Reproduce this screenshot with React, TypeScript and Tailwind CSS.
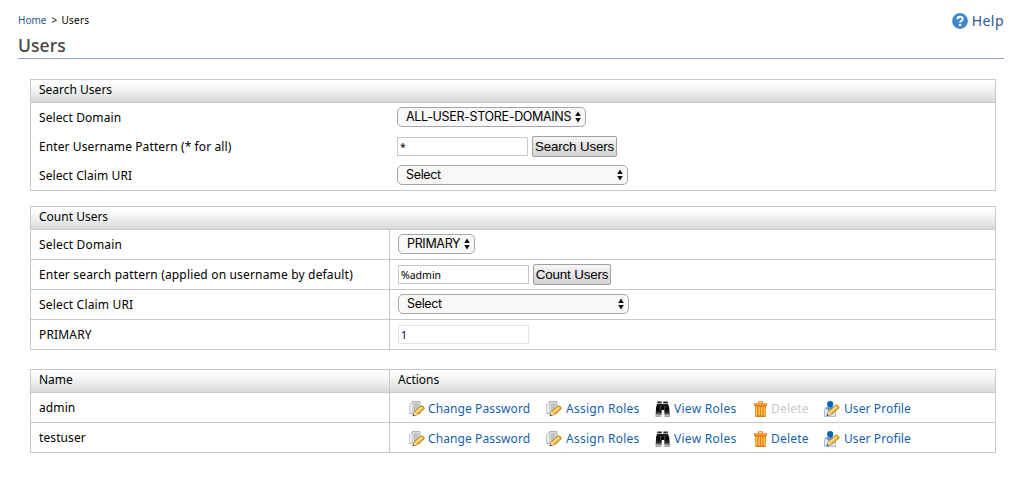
import React from 'react';

const label = "font-['Noto_Sans','Open_Sans',sans-serif] text-[12px] leading-[16px] whitespace-nowrap text-black";

function Header({ children }: { children?: React.ReactNode }) {
  return (
    <div className="flex h-[23px] border-b border-[#c8c8ca] bg-linear-to-b from-white from-10% via-[#eff1f1] via-50% to-[#d6d8da]">
      {children}
    </div>
  );
}

function Select({ text, className }: { text: string; className: string }) {
  return (
    <div className={`flex h-5 items-center justify-between rounded-[5px] border border-[#a6a6a6] bg-[#f8f8f8] pr-[4px] pl-[8px] ${className}`}>
      <span className="font-['Inter',sans-serif] text-[12.5px] leading-[16px] tracking-[-0.33px] whitespace-nowrap text-black">{text}</span>
      <svg width="6" height="12" viewBox="0 0 6 12" className="shrink-0">
        <path d="M3 .5 5.8 5H.2zM3 11.5 5.8 7H.2z" fill="#111" />
      </svg>
    </div>
  );
}

function Field({ value, className }: { value: string; className: string }) {
  return (
    <input
      readOnly
      value={value}
      className={`h-[19px] w-[131px] border bg-white pt-px pl-[2px] font-['Noto_Sans',sans-serif] text-[10.5px] leading-[15px] outline-none ${className}`}
    />
  );
}

function Button({ text, className }: { text: string; className: string }) {
  return (
    <button className={`h-[21px] rounded-[2px] border border-[#a0a0a0] bg-linear-to-b from-[#f6f6f6] to-[#d2d2d2] font-['Liberation_Sans',sans-serif] text-[13.33px] leading-[18px] tracking-[-0.15px] whitespace-nowrap text-black ${className}`}>
      {text}
    </button>
  );
}

function PageEdit() {
  return (
    <svg width="16" height="16" viewBox="0 0 16 16">
      <path d="M3.5.5H11v12H3L1 13V3z" fill="#dcdcdc" stroke="#a9a9a9" strokeWidth=".9" />
      <path d="M1 3 3.5.8V11L1 13z" fill="#f6f6f6" stroke="#b8b8b8" strokeWidth=".6" />
      <path d="M4.8 3h4.6M4.8 5h4.6M4.8 7h4M4.8 9h2.5" stroke="#a8a8a8" />
      <path d="m4 14.8 1.6-4.4 6.6-5.6q2.6.3 3.2 2.8l-6.8 5.9z" fill="#f7b92c" stroke="#a87322" strokeWidth=".9" />
      <path d="m7.2 11.2 5.8-4.9" stroke="#ffe99c" strokeWidth="1.5" />
      <path d="m4.2 14.6 1.4-3.7 2.5 2.3z" fill="#f9e2c4" />
      <path d="m3.6 15.2.8-2 1.4 1.3z" fill="#333" />
    </svg>
  );
}

function Binoculars() {
  return (
    <svg width="16" height="16" viewBox="0 0 16 16">
      <defs>
        <linearGradient id="lens" x1="0" y1="0" x2="0" y2="1">
          <stop offset="0" stopColor="#222" />
          <stop offset=".45" stopColor="#000" />
          <stop offset=".75" stopColor="#333" />
          <stop offset="1" stopColor="#b5b5b5" />
        </linearGradient>
      </defs>
      <path d="M2 3H13l1 2.5 1 9H9.3V9H6.7v5.5H.5L1.2 5.5z" fill="url(#lens)" />
      <path d="M2.3.5h4.4V2H2.3zM8.3.5h4.4V2H8.3z" fill="#222" />
      <path d="M2.3 2.5H7M8.3 2.5H13" stroke="#999" strokeWidth=".8" />
      <path d="M5.7 5v4M9.8 5v4" stroke="#777" strokeWidth=".7" />
      <path d="M.5 15.2h5.6M9.5 15.2h5.5" stroke="#777" strokeWidth="1" />
    </svg>
  );
}

function Trash() {
  return (
    <svg width="16" height="16" viewBox="0 0 16 16">
      <path d="M5 .3h5v1.9h4v2.9H1V2.2h4z" fill="#f0821c" />
      <path d="M6 1.6h3" stroke="#fff0cd" strokeWidth=".9" />
      <path d="M1.5 3.1h12" stroke="#ffb45a" strokeWidth=".9" />
      <path d="M2 5.1h11l-.3 10.6H2.3z" fill="#e98518" />
      <path d="M3.6 6v8.5M6.2 6v8.5M8.8 6v8.5M11.4 6v8.5" stroke="#ffd063" strokeWidth="1.1" />
      <path d="M2.3 15.4h10.4" stroke="#c96c12" strokeWidth=".7" />
    </svg>
  );
}

function UserEdit() {
  return (
    <svg width="16" height="16" viewBox="0 0 16 16">
      <path d="M.6 15.4V8.5Q1 6 4 6h4q3 0 3.4 2.5v6.9z" fill="#e2eff9" stroke="#8ab4d9" strokeWidth=".9" />
      <path d="M1.5 7.5Q6 3.6 10.8 7.5L7 11z" fill="#5d9bd1" />
      <circle cx="6.2" cy="3.2" r="3.1" fill="#0566b3" />
      <path d="m3 14.6 1.4-4.3 7.4-6.2q2.7.2 3.4 2.7l-7.6 6.6z" fill="#f8b931" stroke="#b06d20" strokeWidth=".9" />
      <path d="m6 11.2 6.6-5.6" stroke="#ffe59c" strokeWidth="1.5" />
      <path d="m3.2 14.4 1.2-3.6 2.6 2.3z" fill="#fbe6cc" />
      <path d="m2.6 15.1.8-2 1.4 1.2z" fill="#333" />
    </svg>
  );
}

function Action({ icon, text, className, disabled }: { icon: React.ReactNode; text: string; className: string; disabled?: boolean }) {
  return (
    <a className={`flex shrink-0 items-center ${className}`}>
      {icon}
      <span className={`font-['Noto_Sans',sans-serif] text-[12px] leading-[16px] whitespace-nowrap ${disabled ? 'text-[#c9c9c9]' : 'text-[#145fae]'}`}>{text}</span>
    </a>
  );
}

function UserRow({ name, locked }: { name: string; locked?: boolean }) {
  return (
    <div className="flex h-[30px] border-b border-[#c8c8ca]">
      <div className="w-[359px] border-r border-[#c8c8ca] pt-[7px] pl-[8px]"><span className={`${label} block tracking-[0.1px]`}>{name}</span></div>
      <div className="flex items-center pt-[2px] pl-[19px]">
        <Action icon={<PageEdit />} text="Change Password" className="w-[137px] gap-[3px] tracking-[0.1px]" />
        <Action icon={<PageEdit />} text="Assign Roles" className="w-[109px] gap-[4px] tracking-[0.25px]" />
        <Action icon={<Binoculars />} text="View Roles" className="w-[98px] gap-[3px] tracking-[0.28px]" />
        <Action icon={<Trash />} text="Delete" className="w-[71px] gap-[2px] tracking-[0.2px]" disabled={locked} />
        <Action icon={<UserEdit />} text="User Profile" className="w-[90px] gap-[4px] tracking-[0.1px]" />
      </div>
    </div>
  );
}

function SearchRow({ text, children }: { text: string; children: React.ReactNode }) {
  return (
    <div className="flex h-[29px]">
      <div className="w-[366px] pt-[7px] pl-[8px]"><span className={`${label} block tracking-[0.1px]`}>{text}</span></div>
      <div className="flex items-start">{children}</div>
    </div>
  );
}

function CountRow({ text, children }: { text: string; children: React.ReactNode }) {
  return (
    <div className="flex h-[30px] border-b border-[#c8c8ca]">
      <div className="w-[359px] border-r border-[#c8c8ca] pt-[7px] pl-[8px]"><span className={`${label} block tracking-[0.17px]`}>{text}</span></div>
      <div className="flex items-start pl-[8px]">{children}</div>
    </div>
  );
}

export default function App() {
  return (
    <div className="h-[485px] w-[1023px] overflow-hidden bg-white pl-[18px]">
      <header className="flex h-[59px] w-[986px] justify-between border-b border-[#8fa6cc]">
        <div>
          <div className="mt-[13px] flex gap-[5px] font-['Noto_Sans',sans-serif] text-[10px] leading-[14px] text-black">
            <span className="text-[#2f5590]">Home</span>
            <span className="w-[5px]">&gt;</span>
            <span className="tracking-[0.25px]">Users</span>
          </div>
          <h1 className="mt-[6px] font-['Noto_Sans',sans-serif] text-[17.5px] leading-[24px] font-medium tracking-[0.1px] text-[#444]">Users</h1>
        </div>
        <div className="mt-[11px] flex h-5 items-center gap-[4px]">
          <svg width="16" height="16" viewBox="0 0 16 16">
            <circle cx="8" cy="8" r="7.9" fill="#4189cc" />
            <path d="M5.4 6.2Q5.5 3.7 8 3.7t2.6 2.2Q10.6 7.2 9.2 8 8.1 8.6 8.1 9.8" fill="none" stroke="#fff" strokeWidth="1.9" />
            <path d="M7 11h2.2v2H7z" fill="#fff" />
          </svg>
          <span className="font-['Noto_Sans',sans-serif] text-[14px] leading-5 tracking-[0.45px] text-[#2f5590]">Help</span>
        </div>
      </header>

      <main className="mt-[20px] ml-[12px] w-[966px]">
        <section className="h-[112px] border border-[#c8c8ca]">
          <Header><span className={`${label} mt-[2px] ml-[8px]`}>Search Users</span></Header>
          <SearchRow text="Select Domain"><Select text="ALL-USER-STORE-DOMAINS" className="mt-[4px] w-[189px]" /></SearchRow>
          <SearchRow text="Enter Username Pattern (* for all)">
            <Field value="*" className="mt-[5px] border-[#c8c8c8]" />
            <Button text="Search Users" className="mt-[4px] ml-[4px] w-[85px]" />
          </SearchRow>
          <SearchRow text="Select Claim URI"><Select text="Select" className="mt-[4px] w-[231px]" /></SearchRow>
        </section>

        <section className="mt-[15px] border border-b-0 border-[#c8c8ca]">
          <Header><span className={`${label} mt-[2px] ml-[8px]`}>Count Users</span></Header>
          <CountRow text="Select Domain"><Select text="PRIMARY" className="mt-[4px] w-[77px]" /></CountRow>
          <CountRow text="Enter search pattern (applied on username by default)">
            <Field value="%admin" className="mt-[5px] border-[#c8c8c8]" />
            <Button text="Count Users" className="mt-[4px] ml-[4px] w-[78px]" />
          </CountRow>
          <CountRow text="Select Claim URI"><Select text="Select" className="mt-[4px] w-[231px]" /></CountRow>
          <CountRow text="PRIMARY"><Field value="1" className="mt-[5px] border-[#e3e3e3] text-[#000060]" /></CountRow>
        </section>

        <section className="mt-[19px] border border-b-0 border-[#c8c8ca]">
          <Header>
            <div className="w-[359px] border-r border-[#c8c8ca] pt-[2px] pl-[8px]"><span className={`${label} block`}>Name</span></div>
            <span className={`${label} mt-[2px] ml-[8px]`}>Actions</span>
          </Header>
          <UserRow name="admin" locked />
          <UserRow name="testuser" />
        </section>
      </main>
    </div>
  );
}
